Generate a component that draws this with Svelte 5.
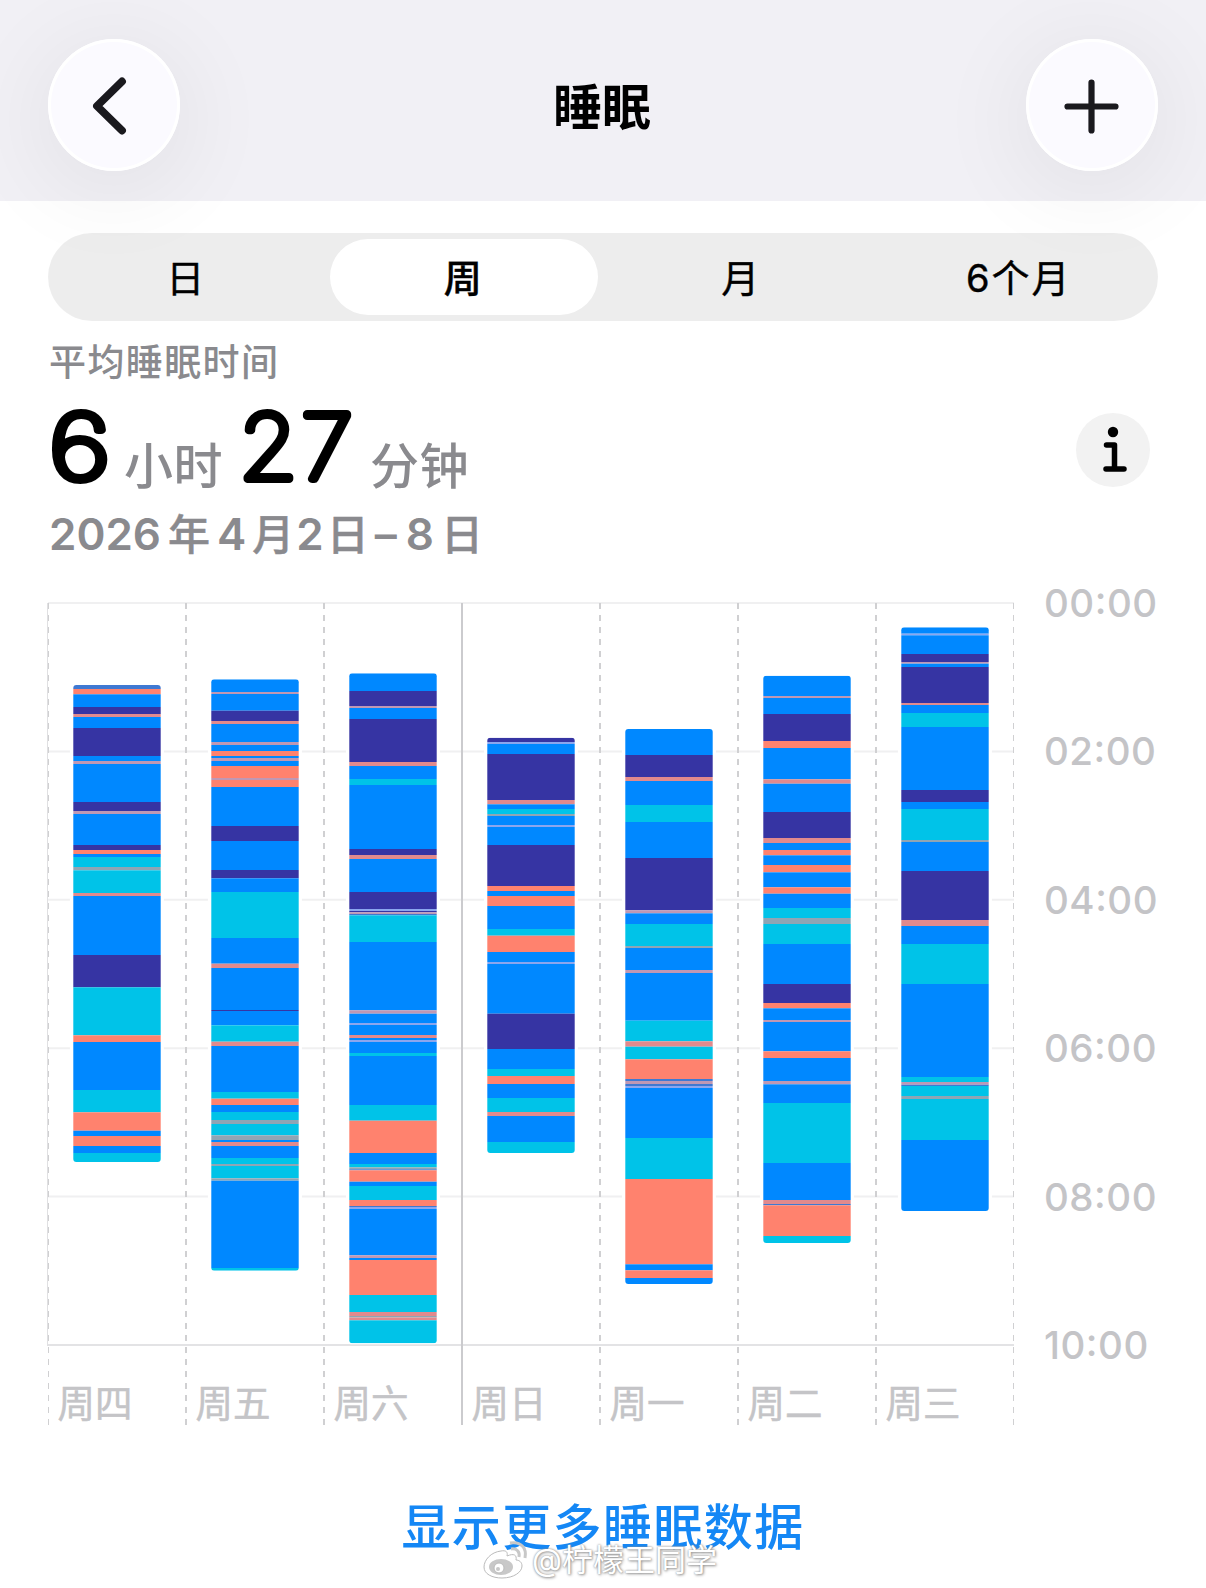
<script lang="ts">
	type Night = { day: string; end: number; stages: string };

	const COLORS: Record<string, string> = {
		B: '#0088ff', // core
		D: '#3634a3', // deep
		C: '#00c3e8', // rem
		O: '#ff826e', // awake
		// very short stretches fade into their neighbours
		o: '#e18a8d',
		p: '#bf98b4',
		l: '#8ba6ee',
		g: '#8fa5b4',
		b: '#3f79d2'
	};

	const RANGES = ['日', '周', '月', '6个月'];
	const HOURS = ['00', '02', '04', '06', '08', '10'];

	const TOP = 603;
	const COL = 138;
	const STEP = 148.4;

	// each entry is the start of a stage on the vertical axis and its code
	const nights: Night[] = [
		{ day: '周四', end: 1162, stages: '685b 689O 694.3B 707D 714o 717B 728D 756B 761p 764B 802D 811p 814B 845D 850O 854B 857C 867g 870.3C 893o 896B 955D 987.3C 1035.3O 1042B 1090C 1112.3O 1130.7B 1136O 1146B 1153C' },
		{ day: '周五', end: 1270.7, stages: '679.3B 692p 694B 710.7D 721o 724B 742p 745B 751O 756B 758p 761B 766O 778p 780O 787B 826D 841B 870D 878.3B 892C 938B 963.7o 968B 1010D 1011B 1025.3C 1041.7o 1046B 1092C 1098.7O 1105B 1112C 1120g 1124C 1135.3g 1140B 1142o 1146B 1158C 1164g 1166C 1178.3g 1180.7B 1268C' },
		{ day: '周六', end: 1343.3, stages: '673.3B 691D 706p 708B 719D 762o 766B 779C 785B 849D 855o 859B 892D 909l 911D 912.3p 914b 915.3C 942B 1010.3p 1013.7B 1023l 1025B 1035o 1038B 1040l 1042B 1053C 1056B 1105C 1120.7O 1153B 1164C 1167.3g 1169.3b 1170.3O 1181.7B 1186C 1200O 1206b 1207l 1209B 1255.3p 1258B 1260O 1295C 1312o 1316g 1317.5o 1320.3C' },
		{ day: '周日', end: 1153, stages: '737.7D 742l 744B 754D 800o 804.3B 809C 814g 816B 825l 827B 845D 886O 891B 896O 906B 929C 935.7O 952B 962l 964B 1013.7D 1049B 1069C 1076O 1084B 1098C 1112o 1116B 1142C' },
		{ day: '周一', end: 1284, stages: '729B 755D 777o 781B 805C 822B 858D 910.3p 913.3B 924C 946g 948B 970p 973B 1020.7C 1041.3o 1046.7C 1059.3O 1079b 1081p 1084b 1086l 1088B 1138C 1179O 1264.3B 1270.3O 1278B' },
		{ day: '周二', end: 1243, stages: '675.7B 696p 698B 714D 741O 748B 779.3o 783.7B 812D 838o 843B 850O 855.3B 865O 872.3B 887.3O 893.7B 908C 918g 924C 944B 984D 1003O 1008.3B 1020p 1022B 1051.3O 1058B 1081p 1084.3B 1103C 1163B 1200o 1204b 1205.3O 1236C' },
		{ day: '周三', end: 1211, stages: '627.3B 633.7l 635.3B 654D 662p 663.7B 667D 703o 705B 713C 727B 790D 802B 809C 840g 842B 871D 920o 926B 944C 984B 1077C 1082p 1084.7b 1086C 1096g 1099C 1140B' }
	];

	const bars = nights.map(({ day, end, stages }, i) => {
		const starts = stages.split(' ').map((s) => ({ y: parseFloat(s) - TOP, fill: COLORS[s.slice(-1)] }));
		const bottom = end - TOP;
		const parts = starts.map((s, n) => ({ ...s, height: (starts[n + 1]?.y ?? bottom) - s.y }));
		return { day, x: i * COL + 25.3, top: parts[0].y, bottom, parts };
	});

	let selected = $state('周');
</script>

<div class="screen">
	<header>
		<button class="round" aria-label="返回">
			<svg width="132" height="132" viewBox="0 0 132 132"><path d="M74 42.500 49 67 74 91.500" /></svg>
		</button>
		<h1>睡眠</h1>
		<button class="round plus" aria-label="添加">
			<svg width="132" height="132" viewBox="0 0 132 132"><path d="M65.500 43.500v48M41.500 67.500h48" /></svg>
		</button>
	</header>

	<main>
		<nav>
			{#each RANGES as range}
				<button class:active={selected === range} onclick={() => (selected = range)}>{range}</button>
			{/each}
		</nav>

		<section class="summary">
			<div>
				<p class="caption">平均睡眠时间</p>
				<p class="total">
					<svg width="62" height="90"><text transform="translate(1 78.500) scale(1.22 1)">6</text></svg>
					<span class="unit">小时</span>
					<svg width="116" height="90"><text transform="translate(1 78.500) scale(1.06 1)">27</text></svg>
					<span class="unit last">分钟</span>
				</p>
				<p class="date">2026<i>年</i>4<i>月</i>2<i>日</i><b>–</b>8<i>日</i></p>
			</div>
			<button class="info" aria-label="信息">
				<svg width="74" height="74" viewBox="0 0 74 74">
					<circle cx="37" cy="19" r="5.2" />
					<path d="M30.500 32h8V56M30 56h18" />
				</svg>
			</button>
		</section>

		<section class="chart">
			<svg class="plot" width="968" height="824" viewBox="-1 -1 968 824">
				{#each HOURS as _, i}
					<line class="hour" class:base={i === 5} x1="0" x2="966" y1={i * STEP} y2={i * STEP} />
				{/each}
				<line class="edge" x1="-0.5" x2="-0.5" y1="0" y2="743" />
				{#each [...nights, null] as _, i}
					<line
						class="day"
						class:solid={i === 3}
						class:thin={i === 0 || i === 7}
						x1={i * COL + (i === 7 ? -0.5 : i === 0 ? 0.5 : 0)}
						x2={i * COL + (i === 7 ? -0.5 : i === 0 ? 0.5 : 0)}
						y1="0"
						y2="822"
					/>
				{/each}
				{#each bars as bar, i}
					<clipPath id="bar-{i}">
						<rect x={bar.x} y={bar.top} width="87.4" height={bar.bottom - bar.top} rx="3" />
					</clipPath>
					<rect class="halo" x={bar.x - 3.4} y={bar.top - 3} width="94" height={bar.bottom - bar.top + 4} rx="5" />
					<g clip-path="url(#bar-{i})">
						{#each bar.parts as part}
							<rect x={bar.x - 1} y={part.y} width="90" height={part.height} fill={part.fill} />
						{/each}
					</g>
					<text class="weekday" x={i * COL + 9.5} y="814">{bar.day}</text>
				{/each}
			</svg>
			<div class="hours">
				{#each HOURS as hour}
					<span>{hour}<em>:</em>00</span>
				{/each}
			</div>
		</section>

		<footer>
			<a href="#more">显示更多睡眠数据</a>
			<div class="mark">
				<svg width="46" height="40" viewBox="0 0 46 40">
					<path d="M18 11C8 12 1 20 1 27c0 7 8 11 18 11 12 0 20-6 20-12 0-4-3-6-6-6 1-5-2-7-9-4 1-4-1-6-6-5Z" />
					<ellipse class="eye" cx="18" cy="27" rx="12" ry="8" />
					<circle cx="16" cy="28" r="5" />
					<circle class="eye" cx="15" cy="29" r="2" />
					<path class="wave" d="M28 9c6-1 9 3 8 8M27 3c11-2 17 5 15 15" />
				</svg>
				<span>@柠檬王同学</span>
			</div>
		</footer>
	</main>
</div>

<style>
	:global(body) {
		margin: 0;
		background: #fff;
	}
	.screen {
		width: 1206px;
		height: 1588px;
		overflow: hidden;
		background: #fff;
		color: #000;
		font-family: Inter, 'Noto Sans CJK SC', sans-serif;
	}
	button {
		border: 0;
		padding: 0;
		font: inherit;
		color: inherit;
	}
	p,
	h1 {
		margin: 0;
	}
	svg {
		display: block;
		overflow: visible;
	}
	header {
		display: flex;
		justify-content: space-between;
		align-items: flex-start;
		box-sizing: border-box;
		height: 201px;
		padding: 39px 48px 0;
		background: #f1f0f5;
	}
	h1 {
		padding: 3px 2px 0 0;
		font-size: 49px;
		font-weight: 700;
		line-height: 132px;
	}
	.round {
		width: 132px;
		height: 132px;
		border-radius: 50%;
		background: #fbfaff;
		box-shadow: inset 0 0 0 3px #fff, 0 14px 90px 14px rgba(0, 0, 0, 0.055);
	}
	.round path {
		fill: none;
		stroke: #1a191e;
		stroke-width: 7.8;
		stroke-linecap: round;
		stroke-linejoin: round;
	}
	.plus path {
		stroke-width: 6.2;
	}
	main {
		padding: 32px 48px 0;
	}
	nav {
		display: grid;
		grid-template-columns: repeat(4, 1fr);
		height: 88px;
		border-radius: 44px;
		background: rgba(0, 0, 0, 0.07);
	}
	nav button {
		margin: 6px 5.5px 6px 4.5px;
		padding-bottom: 4px;
		border-radius: 38px;
		background: none;
		font-size: 38px;
		letter-spacing: 2px;
		-webkit-text-stroke: 0.4px;
	}
	nav .active {
		background: #fff;
		font-weight: 500;
	}
	.summary {
		display: flex;
		justify-content: space-between;
		height: 282px;
	}
	.caption {
		padding: 16px 0 0 1px;
		color: #8a8a8e;
		font-size: 37px;
		font-weight: 500;
		line-height: 52px;
		letter-spacing: 1.4px;
	}
	.total {
		display: flex;
		margin-top: 11px;
	}
	.total text {
		font-size: 89px;
		font-weight: 100;
		stroke: #000;
		stroke-width: 8px;
		stroke-linejoin: round;
		letter-spacing: 3.5px;
	}
	.unit {
		width: 99px;
		height: 60px;
		margin: 0 15px 0 14px;
		padding-top: 32px;
		color: #8a8a8e;
		font-size: 49px;
		font-weight: 500;
		line-height: 70px;
		letter-spacing: 0.5px;
	}
	.last {
		margin-left: 16px;
	}
	.date {
		margin-top: 14px;
		padding-left: 1px;
		color: #8a8a8e;
		font-size: 44px;
		font-weight: 600;
		line-height: 56px;
		white-space: nowrap;
	}
	.date i {
		margin: 0 7px 0 7px;
		font-style: normal;
		font-size: 42px;
		font-weight: 500;
		-webkit-text-stroke: 0.5px;
	}
	.date i:nth-of-type(2) {
		margin: 0 2px 0 6px;
	}
	.date i:nth-of-type(3) {
		margin: 0 5px 0 3px;
	}
	.date i:nth-of-type(4) {
		margin: 0 0 0 7px;
	}
	.date b {
		margin: 0 9px 0 1px;
		font-weight: 600;
	}
	.info {
		width: 74px;
		height: 74px;
		margin: 92px 8px 0 0;
		border-radius: 50%;
		background: #f2f2f2;
	}
	.info path {
		fill: none;
		stroke: #000;
		stroke-width: 5.5;
		stroke-linecap: round;
		stroke-linejoin: round;
	}
	.chart {
		display: flex;
		height: 824px;
		margin-left: -1px;
	}
	.plot {
		flex: none;
		margin-top: -1px;
	}
	.hour {
		stroke: #f0f0f1;
		stroke-width: 2;
	}
	.base {
		stroke: #e3e3e5;
	}
	.edge {
		stroke: #e0e0e2;
	}
	.day {
		stroke: #d0d0d2;
		stroke-width: 2;
		stroke-dasharray: 6 6;
	}
	.solid {
		stroke: #cbcbce;
		stroke-dasharray: none;
	}
	.thin {
		stroke-width: 1;
	}
	.halo {
		fill: #fff;
	}
	.weekday {
		fill: #c4c4c7;
		stroke: #c4c4c7;
		stroke-width: 0.5;
		font-size: 37.5px;
	}
	.hours {
		display: flex;
		flex-direction: column;
		margin: -25px 0 0 29px;
		color: #c4c4c7;
		font-size: 38.5px;
		font-weight: 450;
	}
	.hours span {
		flex: none;
		height: 148.4px;
		line-height: 50px;
		letter-spacing: 0.5px;
	}
	.hours em {
		position: relative;
		top: -3px;
		font-style: normal;
	}
	footer {
		position: relative;
		padding-top: 64px;
		text-align: center;
	}
	footer a {
		color: #1487f5;
		font-size: 49px;
		font-weight: 500;
		line-height: 74px;
		letter-spacing: 1.4px;
		text-decoration: none;
	}
	.mark {
		position: absolute;
		left: 435px;
		top: 111px;
		display: flex;
		align-items: center;
		gap: 3px;
		color: #fff;
		font-size: 31px;
		line-height: 44px;
		text-shadow: 0 0 2px #888, 1px 1px 3px #999;
	}
	.mark path,
	.mark circle {
		fill: #fff;
		stroke: #bbb;
	}
	.mark .eye {
		fill: #c8c8c8;
		stroke: none;
	}
	.mark .wave {
		fill: none;
		stroke: #c8c8c8;
		stroke-width: 3;
	}
</style>
